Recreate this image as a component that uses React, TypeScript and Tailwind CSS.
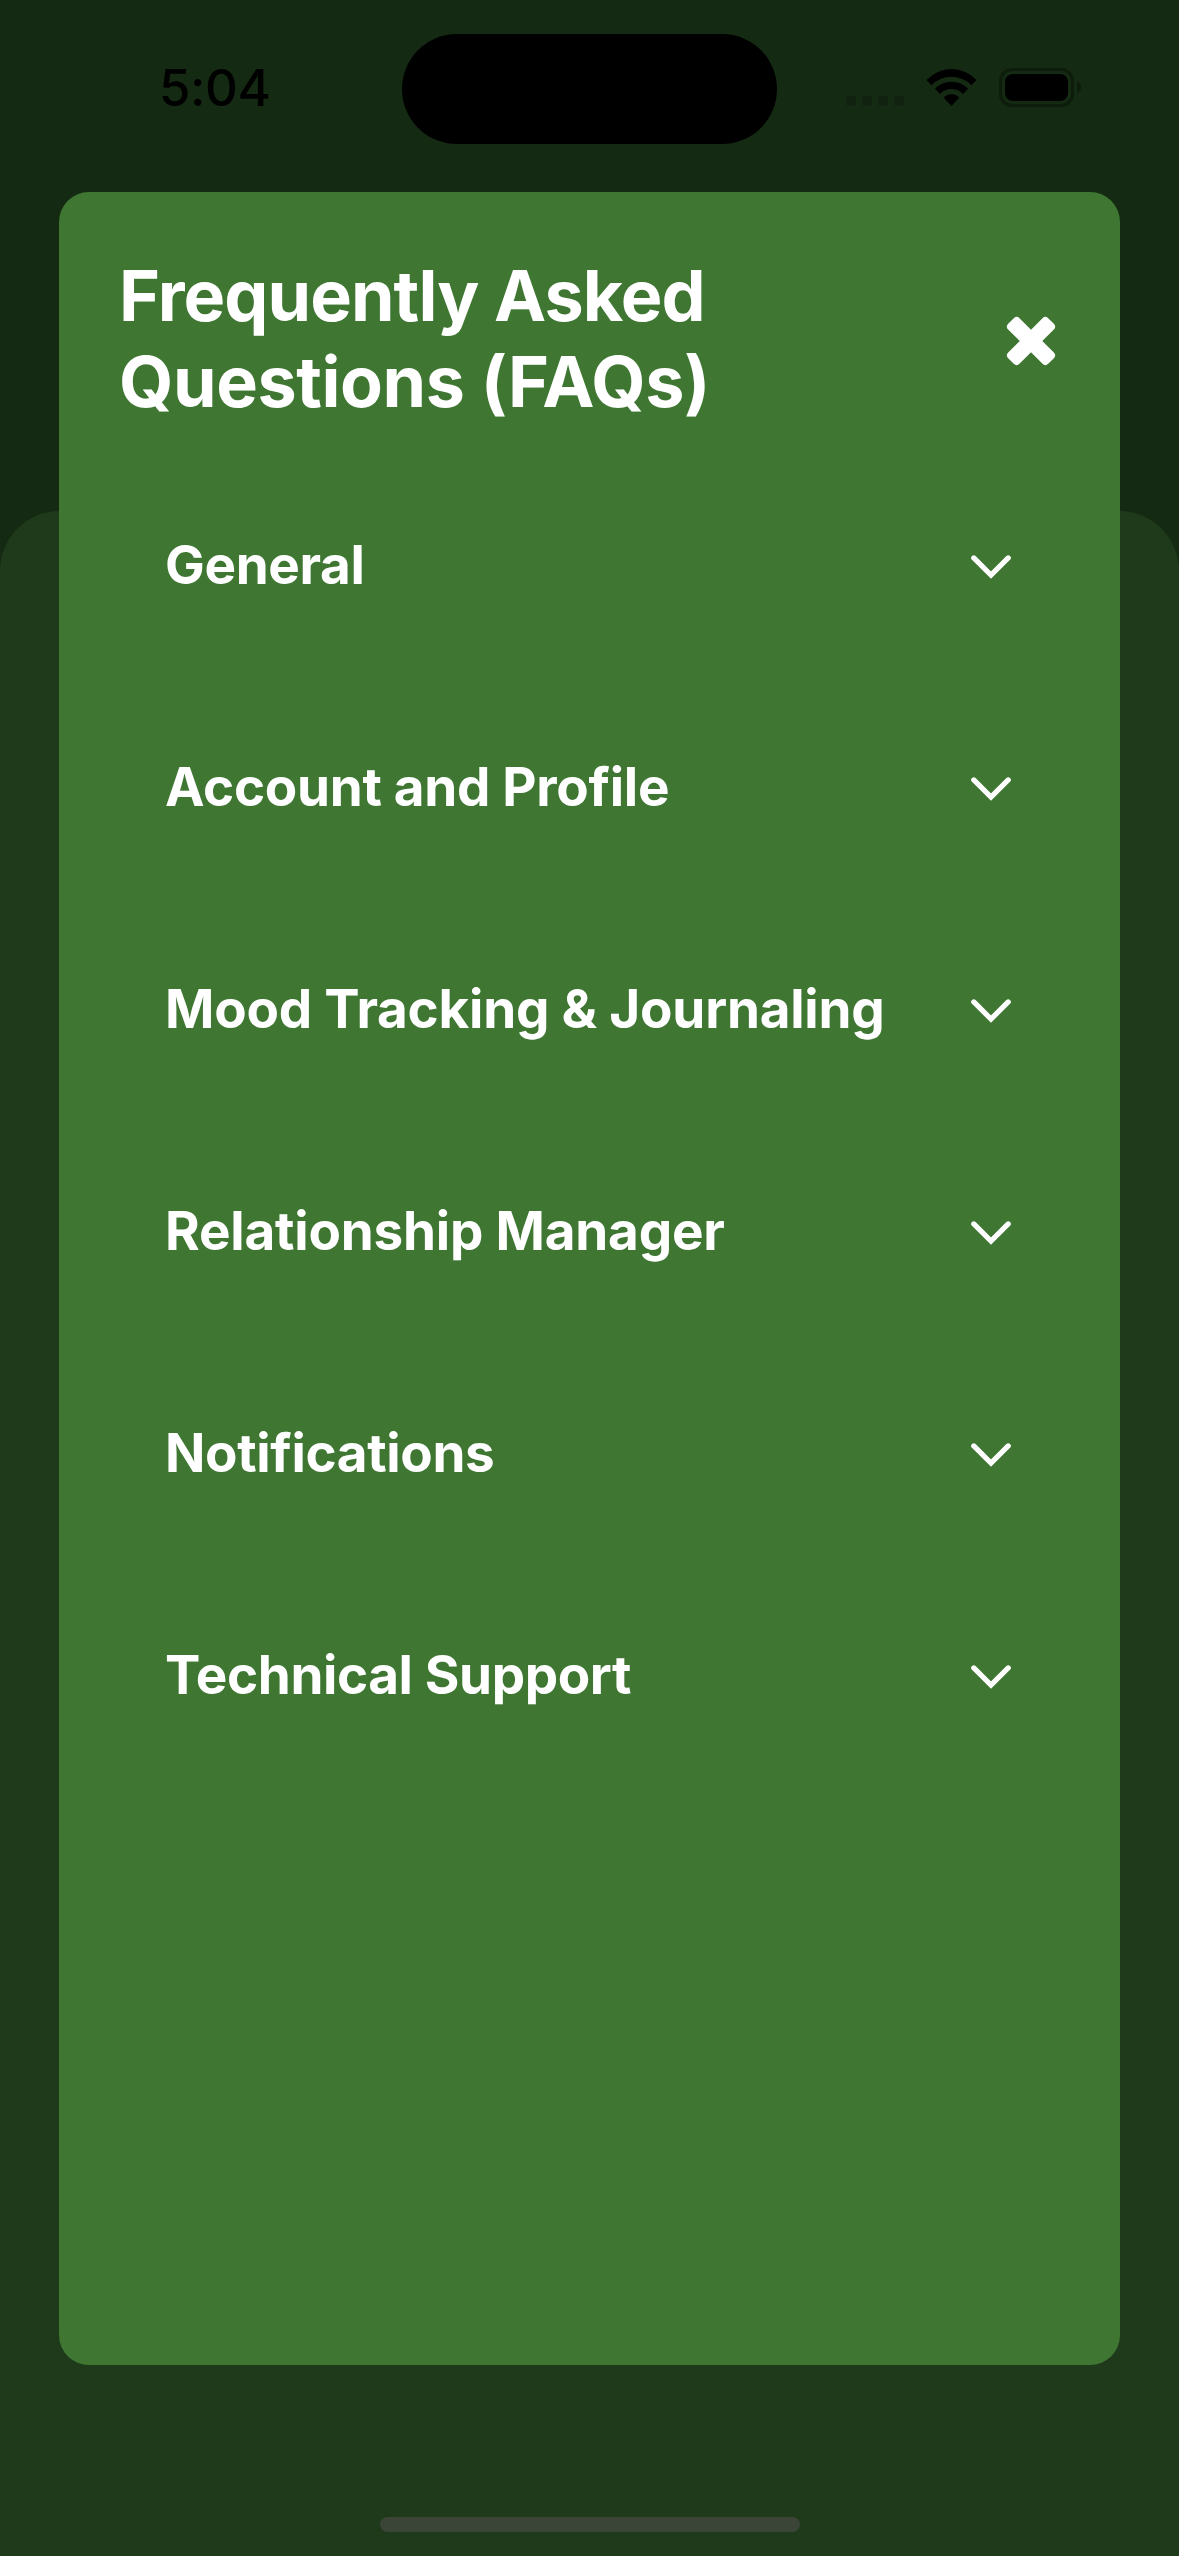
const sections = [
  { name: 'General', tracking: 'tracking-[-0.35px]' },
  { name: 'Account and Profile', tracking: 'tracking-[-0.3px]' },
  { name: 'Mood Tracking & Journaling', tracking: 'tracking-[-0.22px]' },
  { name: 'Relationship Manager', tracking: 'tracking-[-0.2px]' },
  { name: 'Notifications', tracking: 'tracking-[-0.35px]' },
  { name: 'Technical Support', tracking: 'tracking-[-0.4px]' },
];

function CloseIcon() {
  return (
    <svg width="50" height="50" viewBox="-25 -25 50 50" fill="#fff">
      <rect x="-28.3" y="-8" width="56.6" height="16" rx="4" transform="rotate(45)" />
      <rect x="-28.3" y="-8" width="56.6" height="16" rx="4" transform="rotate(-45)" />
    </svg>
  );
}

function ChevronDown() {
  return (
    <svg className="mt-[3px]" width="40" height="24" viewBox="0 0 40 24" fill="none" stroke="#fff" strokeWidth="5.2" strokeLinecap="round">
      <path d="M2.8 2.9 20 20.1 37.2 2.9" />
    </svg>
  );
}

function WifiIcon() {
  return (
    <svg width="51" height="37" viewBox="0 0 51 37" fill="#000">
      <path d="M.5 11A34 34 0 0 1 50.5 11L45.5 16.2A28 28 0 0 0 5.5 16.2Z" />
      <path d="M9 19.7A23 23 0 0 1 42 19.7L37 24.9A16.2 16.2 0 0 0 14 24.9Z" />
      <path d="M17.7 28.8A10.2 10.2 0 0 1 33.3 28.8L25.5 37Z" />
    </svg>
  );
}

function BatteryIcon() {
  return (
    <svg width="83" height="39" viewBox="0 0 83 39">
      <rect x="1.5" y="1.5" width="72" height="36" rx="11.5" fill="none" stroke="#0e1c0c" strokeWidth="3" />
      <rect x="6" y="6" width="63" height="27" rx="8" fill="#000" />
      <path d="M78 13.2Q82 15 82 19.3T78 25.4Z" fill="#0e1c0c" />
    </svg>
  );
}

function StatusBar() {
  return (
    <header className="grid h-[192px] grid-cols-[402px_375px_402px] items-start">
      <div className="pt-[57px] pl-[159px] text-[51px] leading-[62px] font-medium tracking-[-0.5px] text-black">5:04</div>
      <div className="mt-[34px] h-[110px] rounded-full bg-black" />
      <div className="flex items-start pl-[69px]">
        <div className="mt-[96px] flex gap-[6px]">
          {[0, 1, 2, 3].map((dot) => (
            <span key={dot} className="size-[10px] rounded-[3px] bg-[#112210]" />
          ))}
        </div>
        <div className="mt-[69px] ml-[22px]">
          <WifiIcon />
        </div>
        <div className="mt-[68px] ml-[22px]">
          <BatteryIcon />
        </div>
      </div>
    </header>
  );
}

export default function App() {
  return (
    <div className="relative isolate flex h-[2556px] w-[1179px] flex-col overflow-hidden bg-[#152a12] font-['Inter',sans-serif]">
      <div className="absolute inset-x-0 top-[511px] bottom-0 -z-10 rounded-t-[60px] bg-[#1f3a1a]" />
      <StatusBar />
      <main className="mx-[59px] h-[2173px] rounded-[30px] bg-[#3e7632] px-[60px] pt-[60px] text-white">
        <div className="flex h-[180px] items-center justify-between">
          <h1 className="mt-[-7px] text-[70px] leading-[86px] font-bold">
            <span className="block tracking-[-0.95px]">Frequently Asked</span>
            <span className="block tracking-[-0.4px]">Questions (FAQs)</span>
          </h1>
          <button aria-label="Close" className="mt-[-2px] mr-[4px]">
            <CloseIcon />
          </button>
        </div>
        <div className="mt-[22px]">
          {sections.map(({ name, tracking }) => (
            <button key={name} className="flex h-[222px] w-full items-center justify-between pr-[49px] pl-[46px] text-left">
              <span className={`text-[53px] leading-[66px] font-bold ${tracking}`}>{name}</span>
              <ChevronDown />
            </button>
          ))}
        </div>
      </main>
      <div className="mt-[152px] ml-[380px] h-[15px] w-[420px] rounded-full bg-[#3a4437]" />
    </div>
  );
}
